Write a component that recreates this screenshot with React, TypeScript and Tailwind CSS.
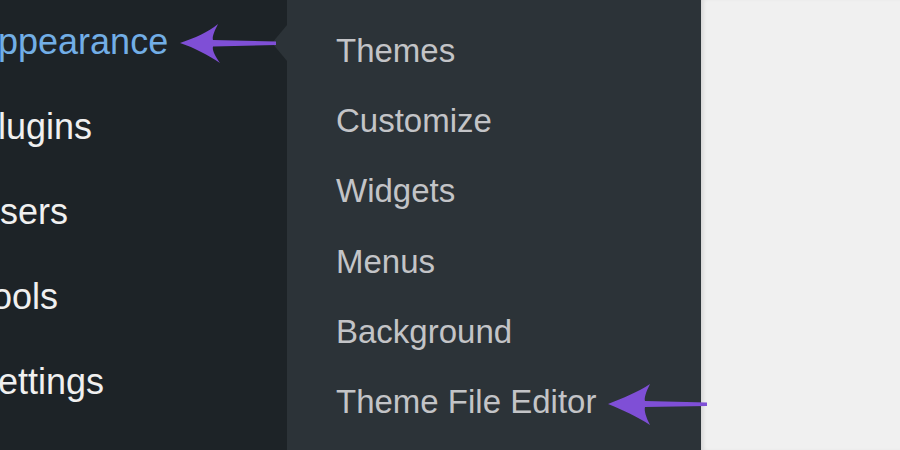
const sideItems = ['Appearance', 'Plugins', 'Users', 'Tools', 'Settings'];
const subItems = ['Themes', 'Customize', 'Widgets', 'Menus', 'Background', 'Theme File Editor'];

export default function App() {
  return (
    <div className="relative flex h-[450px] w-[900px] overflow-hidden bg-[#f0f0f0] font-['Liberation_Sans',Arial,sans-serif]">
      {/* Admin sidebar */}
      <div className="w-[287px] shrink-0 bg-[#1d2327]">
        <ul className="-ml-[26px] -mt-[1px]">
          {sideItems.map((item, i) => (
            <li
              key={item}
              className={`whitespace-nowrap text-[36px] leading-[85px] ${i === 0 ? 'text-[#72aee6]' : 'text-[#f0f0f0]'}`}
            >
              {item}
            </li>
          ))}
        </ul>
      </div>

      {/* Flyout submenu */}
      <div className="relative w-[414px] shrink-0 bg-[#2c3338] pl-[49px] pt-[16px]">
        {/* pointer */}
        <div className="absolute -left-[15px] top-[25px] h-0 w-0 border-y-[18px] border-r-[15px] border-y-transparent border-r-[#2c3338]" />
        <ul>
          {subItems.map((item) => (
            <li key={item} className="whitespace-nowrap text-[33px] leading-[70.2px] text-[#c3c4c7]">
              {item}
            </li>
          ))}
        </ul>
      </div>

      {/* Content area */}
      <div className="flex-1 bg-[#f0f0f0] shadow-[inset_4px_0_4px_-2px_rgba(0,0,0,0.12)]" />

      {/* Annotation arrows */}
      <svg className="pointer-events-none absolute inset-0" width="900" height="450" viewBox="0 0 900 450">
        <path
          d="M180,43 C195,38 208,32 218,24 C214,32 212,37 213,40 L276,41.5 L276,45 L213,46.5 C212,50 215,56 220,63 C208,55 195,48 180,43 Z"
          fill="#7f4fd6"
        />
        <path
          d="M608,404 C623,398 638,392 650,384 C646,392 644,398 645,401 L707,402.5 L707,406 L645,407 C644,411 646,417 650,425 C638,417 623,410 608,404 Z"
          fill="#7f4fd6"
        />
      </svg>
    </div>
  );
}
